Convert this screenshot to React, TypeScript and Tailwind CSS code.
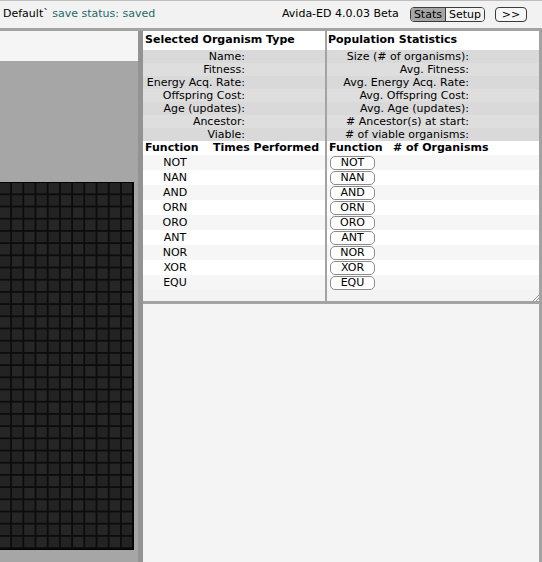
import React from "react";

const orgLabels = ["Name:", "Fitness:", "Energy Acq. Rate:", "Offspring Cost:", "Age (updates):", "Ancestor:", "Viable:"];
const popLabels = [
  "Size (# of organisms):",
  "Avg. Fitness:",
  "Avg. Energy Acq. Rate:",
  "Avg. Offspring Cost:",
  "Avg. Age (updates):",
  "# Ancestor(s) at start:",
  "# of viable organisms:",
];
const funcs = ["NOT", "NAN", "AND", "ORN", "ORO", "ANT", "NOR", "XOR", "EQU"];

function Grid() {
  const pitch = 12.2;
  const rows = 30;
  const cols = 11;
  const cells: React.ReactElement[] = [];
  for (let r = 0; r < rows; r++) {
    for (let c = 0; c < cols; c++) {
      const x = 133 - (c + 1) * pitch + 1;
      const y = r * pitch + 1;
      cells.push(
        <rect key={`${r}-${c}`} x={x} y={y} width={pitch - 1.8} height={pitch - 1.8} fill={(r + c) % 3 === 0 ? "#262626" : "#232323"} />
      );
    }
  }
  return (
    <svg width="134" height="368" viewBox="0 0 134 368" className="block">
      <rect x="0" y="0" width="134" height="368" fill="#0c0c0c" />
      {cells}
      <rect x="-2" y="0.5" width="135" height="367" fill="none" stroke="#000" strokeWidth="1" />
    </svg>
  );
}

export default function App() {
  return (
    <div className="w-[542px] h-[562px] overflow-hidden flex flex-col bg-[#f4f4f4] font-['DejaVu_Sans',Verdana,sans-serif] text-[11px] text-black">
      {/* Top bar */}
      <div className="h-[31px] shrink-0 flex items-center bg-[#f2f2f2] border-t border-[#bdbdbd] border-b-[3px] border-b-[#a3a3a3]">
        <div className="pl-[3px] whitespace-nowrap">
          <span>Default`</span>
          <span className="text-[#1d6a6a]"> save status: saved</span>
        </div>
        <div className="ml-auto flex items-center pr-[15px]">
          <span className="mr-[11px] whitespace-nowrap">Avida-ED 4.0.03 Beta</span>
          <div className="flex h-[15px] rounded-[4px] border border-[#3a3a3a] overflow-hidden">
            <div className="bg-[#a5a5a5] px-[3px] leading-[13px] border-r border-[#3a3a3a]">Stats</div>
            <div className="bg-[#f2f2f2] px-[3px] leading-[13px]">Setup</div>
          </div>
          <div className="ml-[10px] w-[32px] h-[15px] rounded-[4px] border border-[#3a3a3a] bg-[#f6f6f6] flex items-center justify-center leading-[13px]">
            &gt;&gt;
          </div>
        </div>
      </div>

      <div className="flex flex-1 min-h-0">
        {/* Left panel */}
        <div className="w-[138px] shrink-0 flex flex-col">
          <div className="h-[30px] bg-[#f5f5f5]" />
          <div className="flex-1 bg-[#a6a6a6] pt-[121px] flex justify-end pr-[4px]">
            <Grid />
          </div>
        </div>
        <div className="w-[5px] shrink-0 bg-[#939393]" />

        {/* Right panel */}
        <div className="flex-1 flex flex-col border-r-[3px] border-[#a3a3a3]">
          <div className="flex border-b-[3px] border-[#a3a3a3] bg-white">
            {/* Selected organism */}
            <div className="w-[182px] flex flex-col">
              <div className="h-[19px] flex items-center pl-[2px] font-bold">Selected Organism Type</div>
              {orgLabels.map((l, i) => (
                <div key={l} className={`h-[13px] flex items-center ${i % 2 === 0 ? "bg-[#d9d9d9]" : "bg-[#dedede]"}`}>
                  <span className="w-[102px] text-right leading-[13px] whitespace-nowrap">{l}</span>
                </div>
              ))}
              <div className="h-[14px] flex items-center pl-[2px] font-bold whitespace-nowrap">
                <span className="w-[68px]">Function</span>
                <span>Times Performed</span>
              </div>
              {funcs.map((f, i) => (
                <div key={f} className={`h-[15px] flex items-center ${i % 2 === 0 ? "bg-[#f6f6f6]" : "bg-white"}`}>
                  <span className="w-[64px] text-center leading-[15px]">{f}</span>
                </div>
              ))}
              <div className="h-[11px] bg-[#f3f3f3]" />
            </div>
            <div className="w-[2px] bg-[#a3a3a3]" />
            {/* Population stats */}
            <div className="flex-1 flex flex-col relative">
              <div className="h-[19px] flex items-center pl-[1px] font-bold">Population Statistics</div>
              {popLabels.map((l, i) => (
                <div key={l} className={`h-[13px] flex items-center ${i % 2 === 0 ? "bg-[#d9d9d9]" : "bg-[#dedede]"}`}>
                  <span className="w-[142px] text-right leading-[13px] whitespace-nowrap">{l}</span>
                </div>
              ))}
              <div className="h-[14px] flex items-center pl-[2px] font-bold whitespace-nowrap">
                <span className="w-[64px]">Function</span>
                <span># of Organisms</span>
              </div>
              {funcs.map((f, i) => (
                <div key={f} className={`h-[15px] flex items-center ${i % 2 === 0 ? "bg-[#f6f6f6]" : "bg-white"}`}>
                  <div className="ml-[3px] w-[45px] h-[14px] rounded-[5px] border border-[#8c8c8c] bg-white flex items-center justify-center leading-[12px]">
                    {f}
                  </div>
                </div>
              ))}
              <div className="h-[11px] bg-[#f3f3f3]" />
              <svg className="absolute right-0 bottom-0" width="6" height="6" viewBox="0 0 6 6">
                <line x1="0" y1="6" x2="6" y2="0" stroke="#777" strokeWidth="0.8" />
                <line x1="3" y1="6" x2="6" y2="3" stroke="#777" strokeWidth="0.8" />
              </svg>
            </div>
          </div>
          <div className="flex-1 bg-[#f4f4f4]" />
        </div>
      </div>
    </div>
  );
}
